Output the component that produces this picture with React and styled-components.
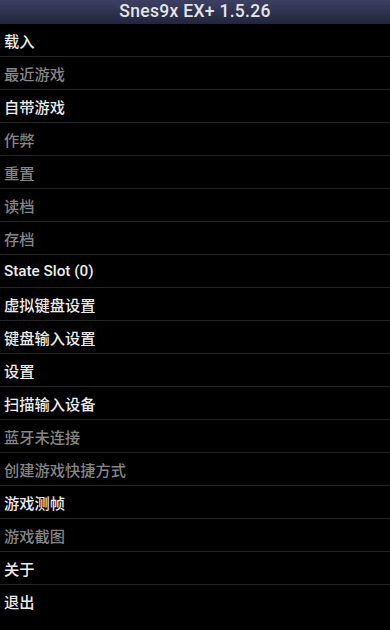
import React from "react";
import styled, { createGlobalStyle } from "styled-components";

const Global = createGlobalStyle`
  html, body { margin: 0; padding: 0; background: #000; }
  body { font-family: Roboto, "Noto Sans CJK SC", sans-serif; }
`;

const Screen = styled.div`
  width: 390px;
  height: 630px;
  background: #000;
  display: flex;
  flex-direction: column;
  overflow: hidden;
`;

const TitleBar = styled.div`
  height: 24px;
  flex: none;
  display: flex;
  align-items: center;
  justify-content: center;
  padding-bottom: 3px;
  box-sizing: border-box;
  background: linear-gradient(#3d4062, #22253d);
  color: #e4e4ea;
  font-size: 17.5px;
  font-family: Roboto, sans-serif;
  font-weight: 500;
  letter-spacing: 0.3px;
`;

const Menu = styled.ul`
  list-style: none;
  margin: 0;
  padding: 0;
  display: flex;
  flex-direction: column;
`;

const Item = styled.li`
  height: 32px;
  flex: none;
  display: flex;
  align-items: center;
  padding-left: 4px;
  font-size: 15.25px;
  font-family: Roboto, "Noto Sans CJK SC", sans-serif;
  font-weight: 500;
  color: ${(p) => (p.$disabled ? "#868686" : "#ececec")};
  border-bottom: 1px solid ${(p) => (p.$last ? "transparent" : "#262626")};
`;

const items = [
  ["载入", false],
  ["最近游戏", true],
  ["自带游戏", false],
  ["作弊", true],
  ["重置", true],
  ["读档", true],
  ["存档", true],
  ["State Slot (0)", false],
  ["虚拟键盘设置", false],
  ["键盘输入设置", false],
  ["设置", false],
  ["扫描输入设备", false],
  ["蓝牙未连接", true],
  ["创建游戏快捷方式", true],
  ["游戏测帧", false],
  ["游戏截图", true],
  ["关于", false],
  ["退出", false],
];

export default function App() {
  return (
    <>
      <Global />
      <Screen>
        <TitleBar>Snes9x EX+ 1.5.26</TitleBar>
        <Menu>
          {items.map(([label, dis], i) => (
            <Item key={label} $disabled={dis} $last={i === items.length - 1}>
              {label}
            </Item>
          ))}
        </Menu>
      </Screen>
    </>
  );
}
